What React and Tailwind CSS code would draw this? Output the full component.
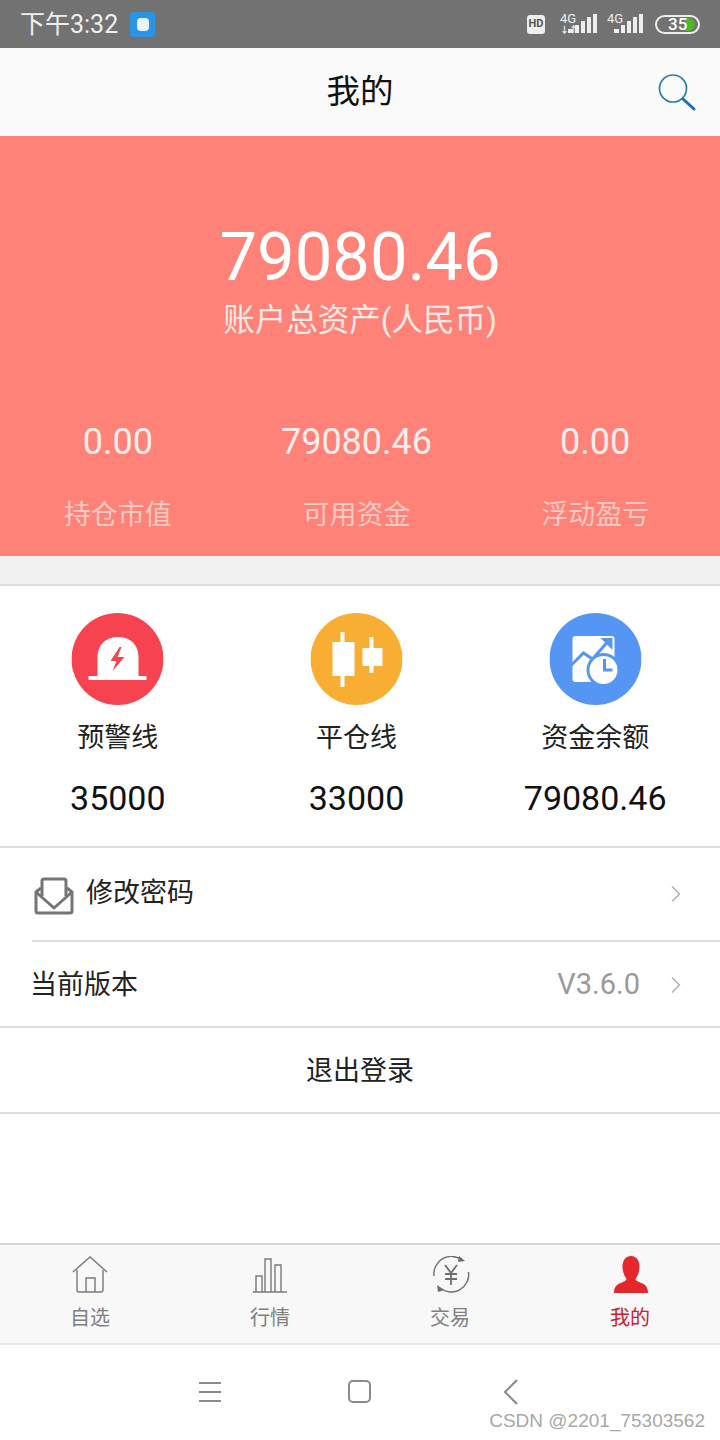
import { ChevronRight } from 'lucide-react';

const FONT = 'font-["Roboto","Noto_Sans_CJK_SC",sans-serif]';

const summary = [
  { value: '0.00', label: '持仓市值' },
  { value: '79080.46', label: '可用资金' },
  { value: '0.00', label: '浮动盈亏' }
];

const SearchIcon = () => (
  <svg viewBox="0 0 40 40" className="absolute right-[23px] top-[25px] w-[40px] h-[40px]" fill="none">
    <circle cx="16" cy="15.5" r="13.5" stroke="#2d7ea6" strokeWidth="1.7" />
    <path d="M26 26l11 10" stroke="#1d6fb8" strokeWidth="3" strokeLinecap="round" />
  </svg>
);

const WarnIcon = () => (
  <svg viewBox="0 0 92 92" className="w-[92px] h-[92px]">
    <circle cx="46" cy="46" r="46" fill="#f7434f" />
    <path d="M26 63V44C26 32 34 24 46.500 24S67 32 67 44v19z" fill="#fff" />
    <rect x="17" y="63" width="58" height="4" fill="#fff" />
    <path d="M48 34 39 48h6l-4 10 12-14h-7l4-10z" fill="#f7434f" />
  </svg>
);

const CandleIcon = () => (
  <svg viewBox="0 0 92 92" className="w-[92px] h-[92px]">
    <circle cx="46" cy="46" r="46" fill="#f8ae33" />
    <rect x="30" y="19" width="4" height="55" fill="#fff" />
    <rect x="22" y="29" width="22" height="34" fill="#fff" />
    <rect x="59" y="24" width="4" height="36" fill="#fff" />
    <rect x="52" y="35" width="20" height="18" fill="#fff" />
  </svg>
);

const FundIcon = () => (
  <svg viewBox="0 0 92 92" className="w-[92px] h-[92px]">
    <circle cx="46" cy="46" r="46" fill="#5596f5" />
    <rect x="23" y="23" width="42" height="46" rx="3" fill="#fff" />
    <path d="M21 53 34 40l9 6 15-17" fill="none" stroke="#5596f5" strokeWidth="3" />
    <path d="M51 25h12v12z" fill="#5596f5" />
    <circle cx="54" cy="57" r="17" fill="#5596f5" />
    <circle cx="54" cy="57" r="14" fill="#fff" />
    <path d="M55 46v11h8" fill="none" stroke="#5596f5" strokeWidth="3" />
  </svg>
);

const metrics = [
  { Icon: WarnIcon, label: '预警线', value: '35000' },
  { Icon: CandleIcon, label: '平仓线', value: '33000' },
  { Icon: FundIcon, label: '资金余额', value: '79080.46' }
];

const MailIcon = () => (
  <svg viewBox="0 0 40 38" className="w-[40px] h-[38px]" fill="none" stroke="#757575" strokeWidth="3" strokeLinejoin="round">
    <path d="M8 19V4a2 2 0 0 1 2-2h20a2 2 0 0 1 2 2v15" />
    <path d="M7 11 2 15v19a2 2 0 0 0 2 2h32a2 2 0 0 0 2-2V15l-5-4" />
    <path d="M2 15l18 16 18-16" />
  </svg>
);

const HomeIcon = () => (
  <svg viewBox="0 0 38 38" className="w-[38px] h-[38px]" fill="none" stroke="#7a7a7a" strokeWidth="1.4">
    <path d="M2 16 19 1l17 15" />
    <path d="M6 14v20a2 2 0 0 0 2 2h22a2 2 0 0 0 2-2V14" />
    <path d="M15 36V22h9v14" />
  </svg>
);

const BarsIcon = () => (
  <svg viewBox="0 0 38 38" className="w-[38px] h-[38px]" fill="none" stroke="#7a7a7a" strokeWidth="1.4">
    <path d="M2 36h34" />
    <path d="M5 36V20h6v16M14 36V3h6v33M24 36V9h6v27" />
  </svg>
);

const TradeIcon = () => (
  <svg viewBox="0 0 38 38" className="w-[38px] h-[38px] translate-x-[1px]" fill="none" stroke="#6f6f6f" strokeWidth="1.4">
    <path d="M2 20A17.500 17.500 0 0 1 30 4" />
    <path d="M27 0l6 5-7 1z" fill="#6f6f6f" stroke="none" />
    <path d="M36.500 16A17.500 17.500 0 0 1 8 32" />
    <path d="M5 29l1 7 6-2z" fill="#6f6f6f" stroke="none" />
    <path d="M13 9l6 8 6-8M19 17v12M13 18h12M13 23h12" strokeWidth="1.8" />
  </svg>
);

const UserIcon = () => (
  <svg viewBox="0 0 38 38" className="w-[38px] h-[38px] translate-x-[1px]">
    <path d="M19 0c6 0 8.500 5 8.500 11 0 5-2 9-4 12 0 2 4 3 8 5 3 2 4.500 4 4.500 9H2c0-5 1.500-7 4.500-9 4-2 8-3 8-5-2-3-4-7-4-12C10.500 5 13 0 19 0z" fill="#e5262d" />
  </svg>
);

const tabs = [
  { Icon: HomeIcon, label: '自选' },
  { Icon: BarsIcon, label: '行情' },
  { Icon: TradeIcon, label: '交易' },
  { Icon: UserIcon, label: '我的', active: true }
];

const Signal = ({ arrows, width }) => (
  <div className={`relative h-[20px] ${width}`}>
    <span className="absolute left-0 top-[-2px] text-[13px] leading-[13px] text-[#eeeeee]">4G</span>
    {arrows && <span className="absolute left-0 top-[12px] text-[9px] leading-[9px] font-bold text-[#eeeeee]">↓↑</span>}
    <svg viewBox="0 0 29 19" className="absolute right-0 top-0 w-[29px] h-[19px]" fill="#eeeeee">
      <rect x="0" y="15" width="5" height="4" />
      <rect x="7" y="11" width="4" height="8" />
      <rect x="13" y="7" width="4" height="12" />
      <rect x="19" y="3" width="4" height="16" />
      <rect x="25" y="0" width="4" height="19" />
    </svg>
  </div>
);

export default function App() {
  return (
    <div className={`relative w-[720px] h-[1440px] bg-white flex flex-col overflow-hidden ${FONT}`}>
      {/* Status bar */}
      <div className="h-[48px] bg-[#737273] flex items-center justify-between pl-[20px] pr-[20px]">
        <div className="flex items-center gap-[12px]">
          <span className="text-[25px] leading-none text-[#f0f0f0]">下午3:32</span>
          <div className="w-[25px] h-[25px] rounded-[4px] bg-[#2a94e6] flex items-center justify-center">
            <div className="w-[12px] h-[13px] rounded-[4px] bg-[#e8f3fc]" />
          </div>
        </div>
        <div className="flex items-center">
          <div className="w-[18px] h-[19px] rounded-[3px] bg-[#eeeeee] flex items-center justify-center text-[11px] font-bold text-[#555]">HD</div>
          <div className="ml-[15px]"><Signal arrows width="w-[37px]" /></div>
          <div className="ml-[10px]"><Signal width="w-[36px]" /></div>
          <div className="relative w-[45px] h-[19px] ml-[12px] rounded-full border-2 border-[#eeeeee] flex items-center pl-[11px] overflow-hidden">
            <div className="absolute right-[3px] top-[1px] bottom-[1px] w-[10px] bg-[#53b62a] rounded-r-full" />
            <span className="relative text-[17px] leading-none font-medium text-white">35</span>
          </div>
        </div>
      </div>

      {/* Header */}
      <div className="relative h-[88px] bg-[#fafafa] flex items-center justify-center">
        <span className="text-[33.500px] text-[#111]">我的</span>
        <SearchIcon />
      </div>

      {/* Assets */}
      <div className="h-[420px] bg-[#fe8278] flex flex-col text-white">
        <div className="pt-[81px] flex flex-col items-center">
          <span className="text-[67px] leading-[80px]">79080.46</span>
          <span className="text-[31.500px] leading-[44px] text-[#ffe9e6] mt-[2px]">账户总资产(人民币)</span>
        </div>
        <div className="grid grid-cols-3 w-[716px] mt-[77px]">
          {summary.map((item) => (
            <div key={item.label} className="flex flex-col items-center gap-[32px] -translate-x-[1.500px]">
              <span className="text-[36px] leading-[44px] text-[#ffeeec]">{item.value}</span>
              <span className="text-[27px] leading-[38px] text-[#ffc9c3]">{item.label}</span>
            </div>
          ))}
        </div>
      </div>

      <div className="h-[30px] bg-[#f1f1f1] border-b-2 border-[#dedede]" />

      {/* Metrics */}
      <div className="h-[262px] grid grid-cols-3 w-full border-b-2 border-[#dedede] pt-[27px] pr-[4px]">
        {metrics.map(({ Icon, label, value }) => (
          <div key={label} className="flex flex-col items-center -translate-x-[1.500px]">
            <Icon />
            <span className="mt-[14px] text-[27px] leading-[38px] text-[#222]">{label}</span>
            <span className="mt-[19px] text-[34px] leading-[44px] text-[#111]">{value}</span>
          </div>
        ))}
      </div>

      {/* Menu */}
      <div className="border-b-2 border-[#dedede]">
        <div className="pl-[32px]">
          <div className="h-[94px] border-b-2 border-[#dedede] flex items-center pr-[30px]">
            <div className="ml-[2px] mt-[3px]"><MailIcon /></div>
            <span className="ml-[12px] text-[27px] text-[#222] mt-[-2px]">修改密码</span>
            <ChevronRight className="ml-auto w-[28px] h-[28px] text-[#b5b5b5]" strokeWidth={1.5} />
          </div>
        </div>
        <div className="h-[84px] flex items-center pl-[30px] pr-[30px] pt-[2px]">
          <span className="text-[27px] text-[#222]">当前版本</span>
          <span className="ml-auto text-[29px] text-[#9a9a9a]">V3.6.0</span>
          <ChevronRight className="ml-[22px] w-[28px] h-[28px] text-[#b5b5b5]" strokeWidth={1.5} />
        </div>
      </div>

      <div className="h-[86px] border-b-2 border-[#dedede] flex items-center justify-center pt-[2px]">
        <span className="text-[27px] text-[#222]">退出登录</span>
      </div>

      <div className="flex-1" />

      {/* Tab bar */}
      <div className="h-[102px] bg-[#f8f8f8] border-t-2 border-b-2 border-t-[#d4d4d4] border-b-[#e8e8e8] grid grid-cols-4">
        {tabs.map(({ Icon, label, active }) => (
          <div key={label} className="flex flex-col items-center pt-[11px]">
            <Icon />
            <span className={`mt-[9px] text-[20px] leading-[30px] ${active ? 'text-[#c9202a]' : 'text-[#808080]'}`}>{label}</span>
          </div>
        ))}
      </div>

      {/* Android nav */}
      <div className="h-[95px] flex items-center justify-center pb-[2px] pr-[2px]">
        <div className="flex flex-col gap-[7px] w-[22px]">
          <div className="h-[2px] bg-[#8a8a8a]" />
          <div className="h-[2px] bg-[#8a8a8a]" />
          <div className="h-[2px] bg-[#8a8a8a]" />
        </div>
        <div className="ml-[127px] w-[23px] h-[23px] rounded-[5px] border-2 border-[#8a8a8a]" />
        <svg viewBox="0 0 16 26" className="ml-[132px] w-[16px] h-[26px]" fill="none" stroke="#8a8a8a" strokeWidth="2">
          <path d="M14 1 2 13l12 12" />
        </svg>
      </div>

      {/* Watermark */}
      <span className="absolute right-[15px] bottom-[7px] text-[19px] leading-[24px] text-[#a8a8a8] font-['Liberation_Sans',sans-serif]">CSDN @2201_75303562</span>
    </div>
  );
}
